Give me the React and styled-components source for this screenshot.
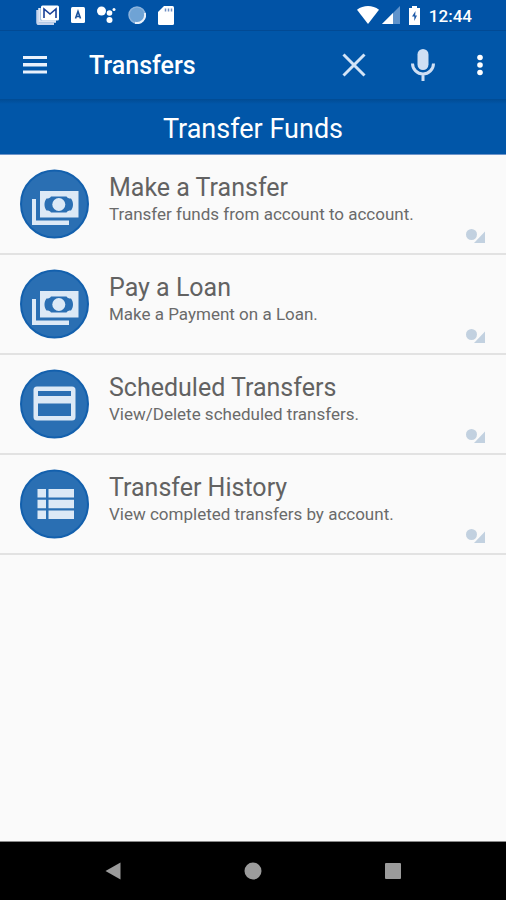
import React from "react";
import styled, { createGlobalStyle } from "styled-components";

const GlobalStyle = createGlobalStyle`
  *, *::before, *::after { box-sizing: border-box; }
  body {
    margin: 0;
    background: #fafafa;
    font-family: Roboto, "Liberation Sans", sans-serif;
  }
`;

const Screen = styled.div`
  display: flex;
  flex-direction: column;
  min-height: 100vh;
`;

const StatusBar = styled.div`
  display: flex;
  justify-content: space-between;
  align-items: center;
  height: 30px;
  padding: 0 34px 0 36px;
  background: #0153a6;
  color: #fff;
`;

const StatusGroup = styled.div`
  display: flex;
  align-items: center;
  gap: ${(p) => p.$gap}px;
`;

const Clock = styled.time`
  font-size: 17px;
  line-height: 24px;
  font-weight: 500;
  padding-top: 2px;
`;

const AppBar = styled.header`
  display: flex;
  align-items: center;
  height: 69px;
  padding: 0 12px 0 16px;
  background: #0156a8;
  border-top: 1px solid #024a94;
  color: #fff;
`;

const Title = styled.h1`
  flex: 1;
  margin: 0 0 0 35px;
  padding-top: 2px;
  font-size: 25px;
  line-height: 32px;
  font-weight: 500;
`;

const IconButton = styled.button`
  display: flex;
  align-items: center;
  justify-content: center;
  width: ${(p) => p.$width || 38}px;
  height: 44px;
  margin: 0 0 0 ${(p) => p.$space || 0}px;
  padding: 0;
  border: 0;
  background: none;
  color: inherit;
  cursor: pointer;
`;

const SectionHeading = styled.h2`
  margin: 0;
  padding: 13px 0 8px;
  border-bottom: 1px solid #6d94c9;
  background: linear-gradient(#014b93, #0156a8 5px);
  color: #fff;
  font-size: 27px;
  line-height: 34px;
  font-weight: 400;
  text-align: center;
`;

const Menu = styled.ul`
  flex: 1;
  margin: 0;
  padding: 0;
  list-style: none;
`;

const MenuItem = styled.li`
  height: 100px;
  border-bottom: 2px solid #e2e2e2;
`;

const MenuLink = styled.a`
  display: flex;
  align-items: flex-start;
  gap: 20px;
  height: 100%;
  padding: 14px 21px 10px 20px;
  color: #626262;
  text-decoration: none;
`;

const ItemText = styled.span`
  display: flex;
  flex: 1;
  flex-direction: column;
  padding-top: 3px;
`;

const ItemTitle = styled.span`
  font-size: 25px;
  line-height: 32px;
`;

const ItemDetail = styled.span`
  font-size: 17px;
  line-height: 20px;
  color: #6a6a6a;
`;

const Corner = styled.svg`
  align-self: flex-end;
  flex: none;
`;

const NavBar = styled.nav`
  display: flex;
  justify-content: center;
  align-items: center;
  gap: 96px;
  height: 59px;
  border-top: 1px solid #8a8a8a;
  background: #000;
  color: #9b9b9b;
`;

const NavButton = styled(IconButton)`
  width: 44px;
`;

function MailIcon() {
  return (
    <svg width="23" height="20" viewBox="0 0 23 20" aria-hidden="true">
      <path d="M1.5 5v12.5a1.5 1.5 0 0 0 1.500 1.500H18" fill="none" stroke="#c5d3ec" strokeWidth="2.500" />
      <path d="M3.500 3v13.500H20" fill="none" stroke="#dfe7f6" strokeWidth="2.500" />
      <rect x="5" y="0.500" width="18" height="15" rx="1.500" fill="#fff" />
      <path d="M8 13V4l6 5 6-5v9" fill="none" stroke="#183f97" strokeWidth="1.600" />
    </svg>
  );
}

function LetterIcon() {
  return (
    <svg width="14" height="16" viewBox="0 0 14 16" aria-hidden="true">
      <rect width="14" height="16" rx="1.500" fill="#fff" />
      <path d="M4.500 11.500l2.500-7 2.500 7M5.500 9.500h3" fill="none" stroke="#1a529c" strokeWidth="1.600" />
    </svg>
  );
}

function AssistantIcon() {
  return (
    <svg width="19" height="18" viewBox="0 0 19 18" fill="#fff" aria-hidden="true">
      <circle cx="4.500" cy="5" r="4.500" />
      <circle cx="12.500" cy="7" r="2.800" />
      <circle cx="12.500" cy="14" r="3" />
      <circle cx="17" cy="3.500" r="1.500" />
    </svg>
  );
}

function SyncIcon() {
  return (
    <svg width="18" height="18" viewBox="0 0 18 18" aria-hidden="true">
      <circle cx="9" cy="9" r="8" fill="#6fa3d5" stroke="#8db4dd" strokeWidth="1.500" />
      <path d="M16.800 7A8 8 0 0 1 7 16.800" fill="none" stroke="#e9f1fb" strokeWidth="2" />
    </svg>
  );
}

function SdIcon() {
  return (
    <svg width="16" height="19" viewBox="0 0 16 19" aria-hidden="true">
      <path d="M6 0h8.500A1.500 1.500 0 0 1 16 1.500v16a1.500 1.500 0 0 1-1.500 1.500h-13A1.500 1.500 0 0 1 0 17.500V6z" fill="#fff" />
      <path d="M7.500 2.500v3M10.500 2.500v3M13.500 2.500v3" stroke="#6f8fc4" strokeWidth="1.500" />
    </svg>
  );
}

function WifiIcon() {
  return (
    <svg width="22" height="18" viewBox="0 0 22 18" aria-hidden="true">
      <path d="M0 3.800C6.500-1.200 15.500-1.200 22 3.800L11 18z" fill="#fff" />
    </svg>
  );
}

function SignalIcon() {
  return (
    <svg width="18" height="18" viewBox="0 0 18 18" aria-hidden="true">
      <path d="M0 18L18 0v18z" fill="#5f93cc" />
      <path d="M0 18L11 7v11z" fill="#fff" />
    </svg>
  );
}

function BatteryIcon() {
  return (
    <svg width="11" height="19" viewBox="0 0 11 19" aria-hidden="true">
      <path d="M3 0h5v2h3v17H0V2h3z" fill="#fff" />
      <path d="M6.500 5L3 10.500h2.300v4.500L8 9.500H6.200z" fill="#1f5ba8" />
    </svg>
  );
}

function MenuIcon() {
  return (
    <svg width="24" height="18" viewBox="0 0 24 18" fill="#e9f1fc" aria-hidden="true">
      <path d="M0 0h24v3H0zM0 7h24v3.500H0zM0 14.500h24v3H0z" />
    </svg>
  );
}

function CloseIcon() {
  return (
    <svg width="24" height="24" viewBox="0 0 24 24" aria-hidden="true">
      <path d="M1.500 1.500l21 21M22.500 1.500l-21 21" stroke="#d3e4f7" strokeWidth="3" />
    </svg>
  );
}

function MicIcon() {
  return (
    <svg width="24" height="32" viewBox="0 0 24 32" aria-hidden="true">
      <rect x="6.500" y="0" width="11" height="21" rx="5.500" fill="#cfdff4" />
      <path d="M1.500 14.500a10.500 10.500 0 0 0 21 0M12 25v7" fill="none" stroke="#cfdff4" strokeWidth="3" />
    </svg>
  );
}

function MoreIcon() {
  return (
    <svg width="6" height="22" viewBox="0 0 6 22" fill="#fff" aria-hidden="true">
      <circle cx="3" cy="3.500" r="2.800" />
      <circle cx="3" cy="11" r="2.800" />
      <circle cx="3" cy="18.500" r="2.800" />
    </svg>
  );
}

const glyphs = {
  money: (
    <>
      <path d="M12 29.500h4V51h33v4.500H12zM20 21.500h38.500V48H20z" />
      <path d="M31 27h15.500c1 1.500 2 2 4.500 2 1.500 2 2 4 2 6s-.5 4-2 6c-2.500 0-3.500.5-4.500 2H31c-1-1.500-2-2-4.500-2-1.500-2-2-4-2-6s.5-4 2-6c2.500 0 3.500-.5 4.500-2z" fill="#2a6fb3" />
      <circle cx="38.800" cy="35" r="6.500" />
    </>
  ),
  card: (
    <>
      <rect x="13.500" y="17" width="42" height="34" rx="3.500" />
      <path d="M18 21.500h33v5H18zM18 34h33v12.500H18z" fill="#2a6fb3" />
    </>
  ),
  list: (
    <path d="M17.500 19.500h8.500V28h-8.500zM28.500 19.500H54V28H28.500zM17.500 30.200h8.500v8.500h-8.500zM28.500 30.200H54v8.500H28.500zM17.500 41h8.500v8.500h-8.500zM28.500 41H54v8.500H28.500z" />
  ),
};

function RoundIcon({ name }) {
  return (
    <svg width="69" height="70" viewBox="0 0 69 69" fill="#dce9f6" aria-hidden="true">
      <circle cx="34.500" cy="34.500" r="33.500" fill="#2a6fb3" stroke="#1360ad" strokeWidth="2" />
      {glyphs[name]}
    </svg>
  );
}

const items = [
  { icon: "money", title: "Make a Transfer", detail: "Transfer funds from account to account." },
  { icon: "money", title: "Pay a Loan", detail: "Make a Payment on a Loan." },
  { icon: "card", title: "Scheduled Transfers", detail: "View/Delete scheduled transfers." },
  { icon: "list", title: "Transfer History", detail: "View completed transfers by account." },
];

export default function App() {
  return (
    <Screen>
      <GlobalStyle />
      <StatusBar>
        <StatusGroup $gap={12}>
          <MailIcon />
          <LetterIcon />
          <AssistantIcon />
          <SyncIcon />
          <SdIcon />
        </StatusGroup>
        <StatusGroup $gap={9}>
          <StatusGroup $gap={3}>
            <WifiIcon />
            <SignalIcon />
          </StatusGroup>
          <BatteryIcon />
          <Clock>12:44</Clock>
        </StatusGroup>
      </StatusBar>
      <AppBar>
        <IconButton aria-label="Open menu"><MenuIcon /></IconButton>
        <Title>Transfers</Title>
        <IconButton aria-label="Close"><CloseIcon /></IconButton>
        <IconButton aria-label="Voice search" $space={31}><MicIcon /></IconButton>
        <IconButton aria-label="More options" $space={24} $width={28}><MoreIcon /></IconButton>
      </AppBar>
      <SectionHeading>Transfer Funds</SectionHeading>
      <Menu>
        {items.map((item) => (
          <MenuItem key={item.title}>
            <MenuLink href="#">
              <RoundIcon name={item.icon} />
              <ItemText>
                <ItemTitle>{item.title}</ItemTitle>
                <ItemDetail>{item.detail}</ItemDetail>
              </ItemText>
              <Corner width="19" height="14" viewBox="0 0 19 14" fill="#c2d1e0" aria-hidden="true">
                <circle cx="5.500" cy="5.500" r="5.500" />
                <path d="M19 2.500V14H8z" />
              </Corner>
            </MenuLink>
          </MenuItem>
        ))}
      </Menu>
      <NavBar>
        <NavButton aria-label="Back">
          <svg width="16" height="18" viewBox="0 0 16 18" fill="currentColor" aria-hidden="true">
            <path d="M15.500 0.500v17L0.500 9z" />
          </svg>
        </NavButton>
        <NavButton aria-label="Home">
          <svg width="18" height="18" viewBox="0 0 18 18" fill="currentColor" aria-hidden="true">
            <circle cx="9" cy="9" r="8.500" />
          </svg>
        </NavButton>
        <NavButton aria-label="Recent apps">
          <svg width="16" height="16" viewBox="0 0 16 16" fill="currentColor" aria-hidden="true">
            <rect width="16" height="16" rx="1" />
          </svg>
        </NavButton>
      </NavBar>
    </Screen>
  );
}
